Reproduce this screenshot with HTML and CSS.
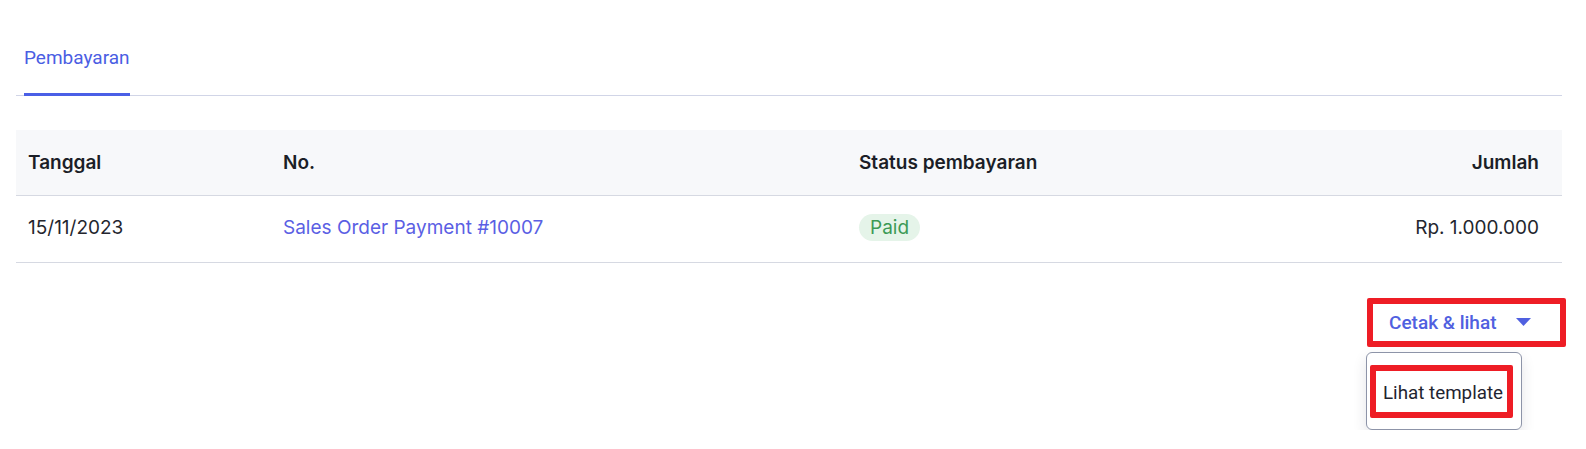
FILE: index.html
```html
<!DOCTYPE html>
<html lang="id">
<head>
<meta charset="utf-8">
<title>Pembayaran</title>
<link rel="stylesheet" href="styles.css">
</head>
<body>
<div class="page">
  <div class="tabs">
    <div class="tab active">Pembayaran</div>
  </div>

  <table class="payments">
    <colgroup>
      <col class="c-date">
      <col class="c-no">
      <col class="c-status">
      <col>
    </colgroup>
    <thead>
      <tr>
        <th>Tanggal</th>
        <th>No.</th>
        <th>Status pembayaran</th>
        <th class="num">Jumlah</th>
      </tr>
    </thead>
    <tbody>
      <tr>
        <td>15/11/2023</td>
        <td><a class="link" href="#">Sales Order Payment #10007</a></td>
        <td><span class="badge">Paid</span></td>
        <td class="num">Rp. 1.000.000</td>
      </tr>
    </tbody>
  </table>

  <div class="actions">
    <div class="dropdown">
      <button class="print-btn" type="button">
        <span>Cetak &amp; lihat</span>
        <svg class="caret" width="15" height="8" viewBox="0 0 15 8"><path d="M0 0h15L7.5 8z" fill="currentColor"/></svg>
      </button>
      <div class="menu">
        <div class="menu-item">Lihat template</div>
      </div>
    </div>
  </div>
</div>
</body>
</html>
```
FILE: styles.css
```css
* { box-sizing: border-box; }
html, body { margin: 0; padding: 0; background: #ffffff; }
body { font-family: Inter, "Noto Sans", sans-serif; color: #24262e; }

.page {
  padding: 0 24px 0 16px;
}

.tabs {
  display: flex;
  padding: 47px 0 0 8px;
  border-bottom: 1px solid #d1d5e7;
}
.tab {
  font-family: Roboto, "Liberation Sans", sans-serif;
  font-size: 19px;
  line-height: 22px;
  padding-bottom: 24px;
  color: #4a5ee3;
  border-bottom: 3px solid #4a5fe6;
  margin-bottom: -1px;
}

.payments {
  margin-top: 34px;
  width: 100%;
  border-collapse: collapse;
  font-size: 19px;
}
.c-date { width: 255px; }
.c-no { width: 576px; }
.c-status { width: 520px; }

.payments th {
  height: 65px;
  padding: 0 12px;
  background: #f7f8fa;
  border-bottom: 1px solid #d6d9e2;
  text-align: left;
  font-weight: 600;
  color: #1b1e27;
  line-height: 23px;
}
.payments td {
  height: 67px;
  padding: 0 12px 3px;
  border-bottom: 1px solid #d6d9e2;
  line-height: 23px;
  color: #24262e;
}
.payments .num { text-align: right; padding-right: 23px; }

.link {
  color: #5b5fe4;
  text-decoration: none;
}

.badge {
  display: inline-block;
  padding: 2px 11px;
  border-radius: 14px;
  background: #e5f4e9;
  color: #3c9a56;
}

.actions {
  display: flex;
  justify-content: flex-end;
  margin-top: 35px;
  margin-right: -4px;
}
.dropdown {
  display: flex;
  flex-direction: column;
  align-items: flex-start;
}

.print-btn {
  display: flex;
  align-items: center;
  width: 199px;
  height: 49px;
  padding: 0 29px 0 16px;
  border: 6px solid #ee1d25;
  border-radius: 2px;
  background: #ffffff;
  font-family: Roboto, "Liberation Sans", sans-serif;
  font-size: 19px;
  font-weight: 500;
  color: #5060e0;
  cursor: pointer;
}
.print-btn span { flex: 1; text-align: left; }
.caret { display: block; }

.menu {
  margin: 5px 0 0 -1px;
  width: 156px;
  height: 78px;
  padding: 12px 8px 0 3px;
  border: 1px solid #8d94a8;
  border-radius: 6px;
  background: #ffffff;
  box-shadow: 0 6px 14px rgba(30, 35, 60, 0.12);
}
.menu-item {
  height: 53px;
  display: flex;
  align-items: center;
  padding: 4px 0 0 7px;
  border: 6px solid #ee1d25;
  border-radius: 2px;
  font-family: Roboto, "Liberation Sans", sans-serif;
  font-size: 18.8px;
  color: #1f2430;
  white-space: nowrap;
}
```
